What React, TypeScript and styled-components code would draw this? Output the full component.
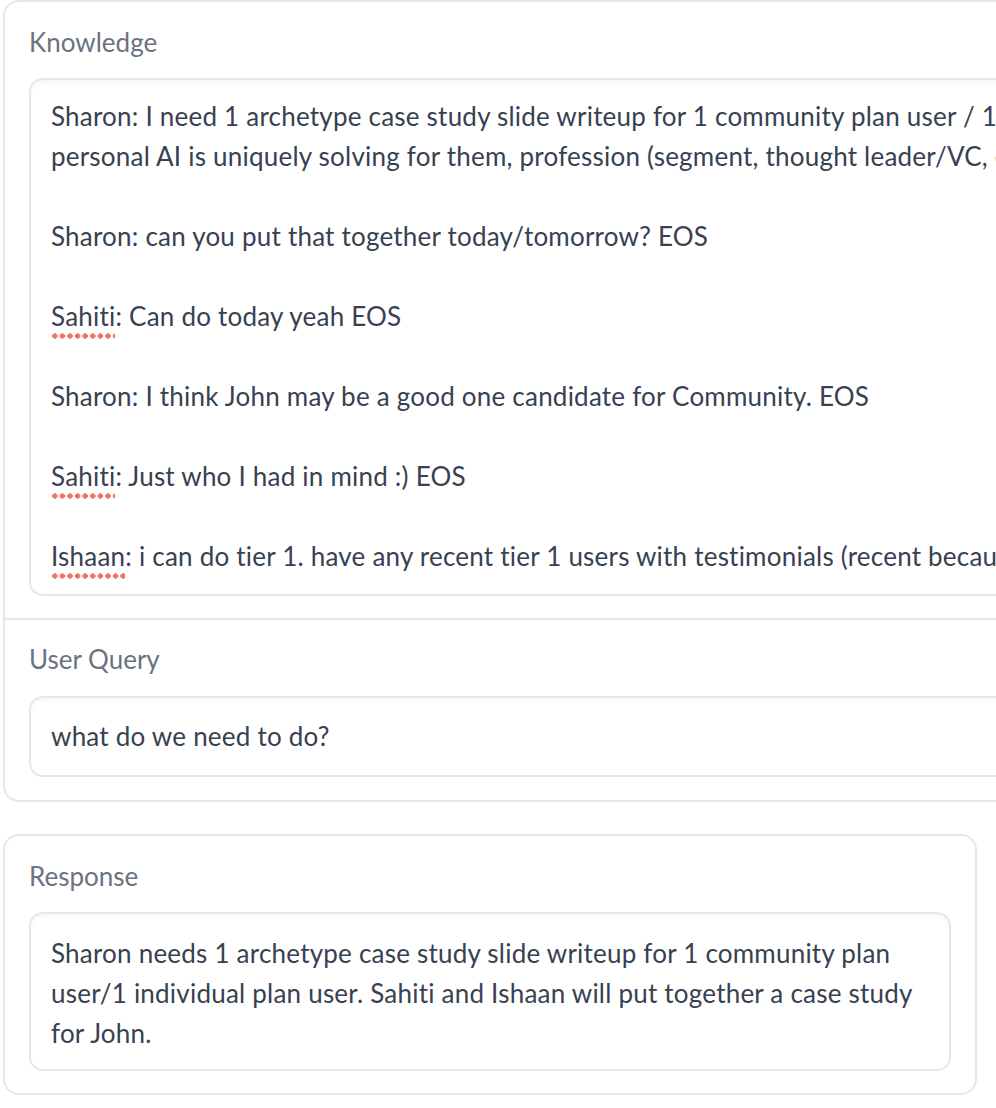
import React from 'react';
import styled, { createGlobalStyle } from 'styled-components';

const GlobalStyle = createGlobalStyle`
  html, body {
    margin: 0;
    padding: 0;
    background: #ffffff;
    overflow: hidden;
  }
  body {
    font-family: Lato, "Open Sans", sans-serif;
    color: #374151;
    font-feature-settings: "liga" 0;
    font-variant-ligatures: none;
  }
`;

const Page = styled.div`
  width: 996px;
  height: 1108px;
  overflow: hidden;
  padding-left: 3px;
  box-sizing: border-box;
`;

const Panel = styled.div<{ $width: number; $gapAfter?: number }>`
  width: ${(p) => p.$width}px;
  box-sizing: border-box;
  border: 2px solid #e5e7eb;
  border-radius: 16px;
  background: #ffffff;
  overflow: hidden;
  margin-bottom: ${(p) => p.$gapAfter || 0}px;
`;

const Block = styled.div<{ $divider?: boolean; $pt: number; $pb: number }>`
  padding: ${(p) => p.$pt}px 24px ${(p) => p.$pb}px 24px;
  border-bottom: ${(p) => (p.$divider ? '2px solid #e5e7eb' : 'none')};
`;

const Label = styled.div<{ $gap?: number }>`
  font-size: 26px;
  line-height: 30px;
  color: #6b7280;
  margin-bottom: ${(p) => p.$gap ?? 21}px;
`;

const TextBox = styled.div<{ $wrap?: boolean; $pt?: number; $pb?: number }>`
  border: 2px solid #e5e7eb;
  border-radius: 14px;
  box-shadow: inset 0 4px 6px -3px rgba(0, 0, 0, 0.06);
  padding: ${(p) => p.$pt ?? 16}px 20px ${(p) => p.$pb ?? 18}px 20px;
  font-size: 26px;
  line-height: 40px;
  letter-spacing: 0.22px;
  color: #374151;
  white-space: ${(p) => (p.$wrap ? 'pre-line' : 'pre')};
  overflow: hidden;
`;

// red dotted spell-check underline
const Misspelled = styled.span`
  padding-bottom: 7px;
  background-image: radial-gradient(circle, #e8776a 2.5px, transparent 2.9px);
  background-size: 7.6px 6px;
  background-repeat: repeat-x;
  background-position: 0 100%;
`;

const knowledge = [
  'Sharon: I need 1 archetype case study slide writeup for 1 community plan user / 1 individual plan user - who they are, what',
  'personal AI is uniquely solving for them, profession (segment, thought leader/VC, etc.), and a quote if we have one',
];

export default function App() {
  return (
    <>
      <GlobalStyle />
      <Page>
        <Panel $width={1400} $gapAfter={32}>
          <Block $divider $pt={25} $pb={22}>
            <Label>Knowledge</Label>
            <TextBox>
              {knowledge[0]}
              {'\n'}
              {knowledge[1]}
              {'\n\n'}
              {'Sharon: can you put that together today/tomorrow? EOS'}
              {'\n\n'}
              <Misspelled>Sahiti</Misspelled>
              {': Can do today yeah EOS'}
              {'\n\n'}
              {'Sharon: I think John may be a good one candidate for Community. EOS'}
              {'\n\n'}
              <Misspelled>Sahiti</Misspelled>
              {': Just who I had in mind :) EOS'}
              {'\n\n'}
              <Misspelled>Ishaan</Misspelled>
              {': i can do tier 1. have any recent tier 1 users with testimonials (recent because they know the product best) EOS'}
            </TextBox>
          </Block>
          <Block $pt={24} $pb={23}>
            <Label $gap={22}>User Query</Label>
            <TextBox $pt={18} $pb={19}>what do we need to do?</TextBox>
          </Block>
        </Panel>
        <Panel $width={974}>
          <Block $pt={25} $pb={22}>
            <Label>Response</Label>
            <TextBox $wrap $pt={19} $pb={16}>
              {'Sharon needs 1 archetype case study slide writeup for 1 community plan\nuser/1 individual plan user. Sahiti and Ishaan will put together a case study\nfor John.'}
            </TextBox>
          </Block>
        </Panel>
      </Page>
    </>
  );
}
